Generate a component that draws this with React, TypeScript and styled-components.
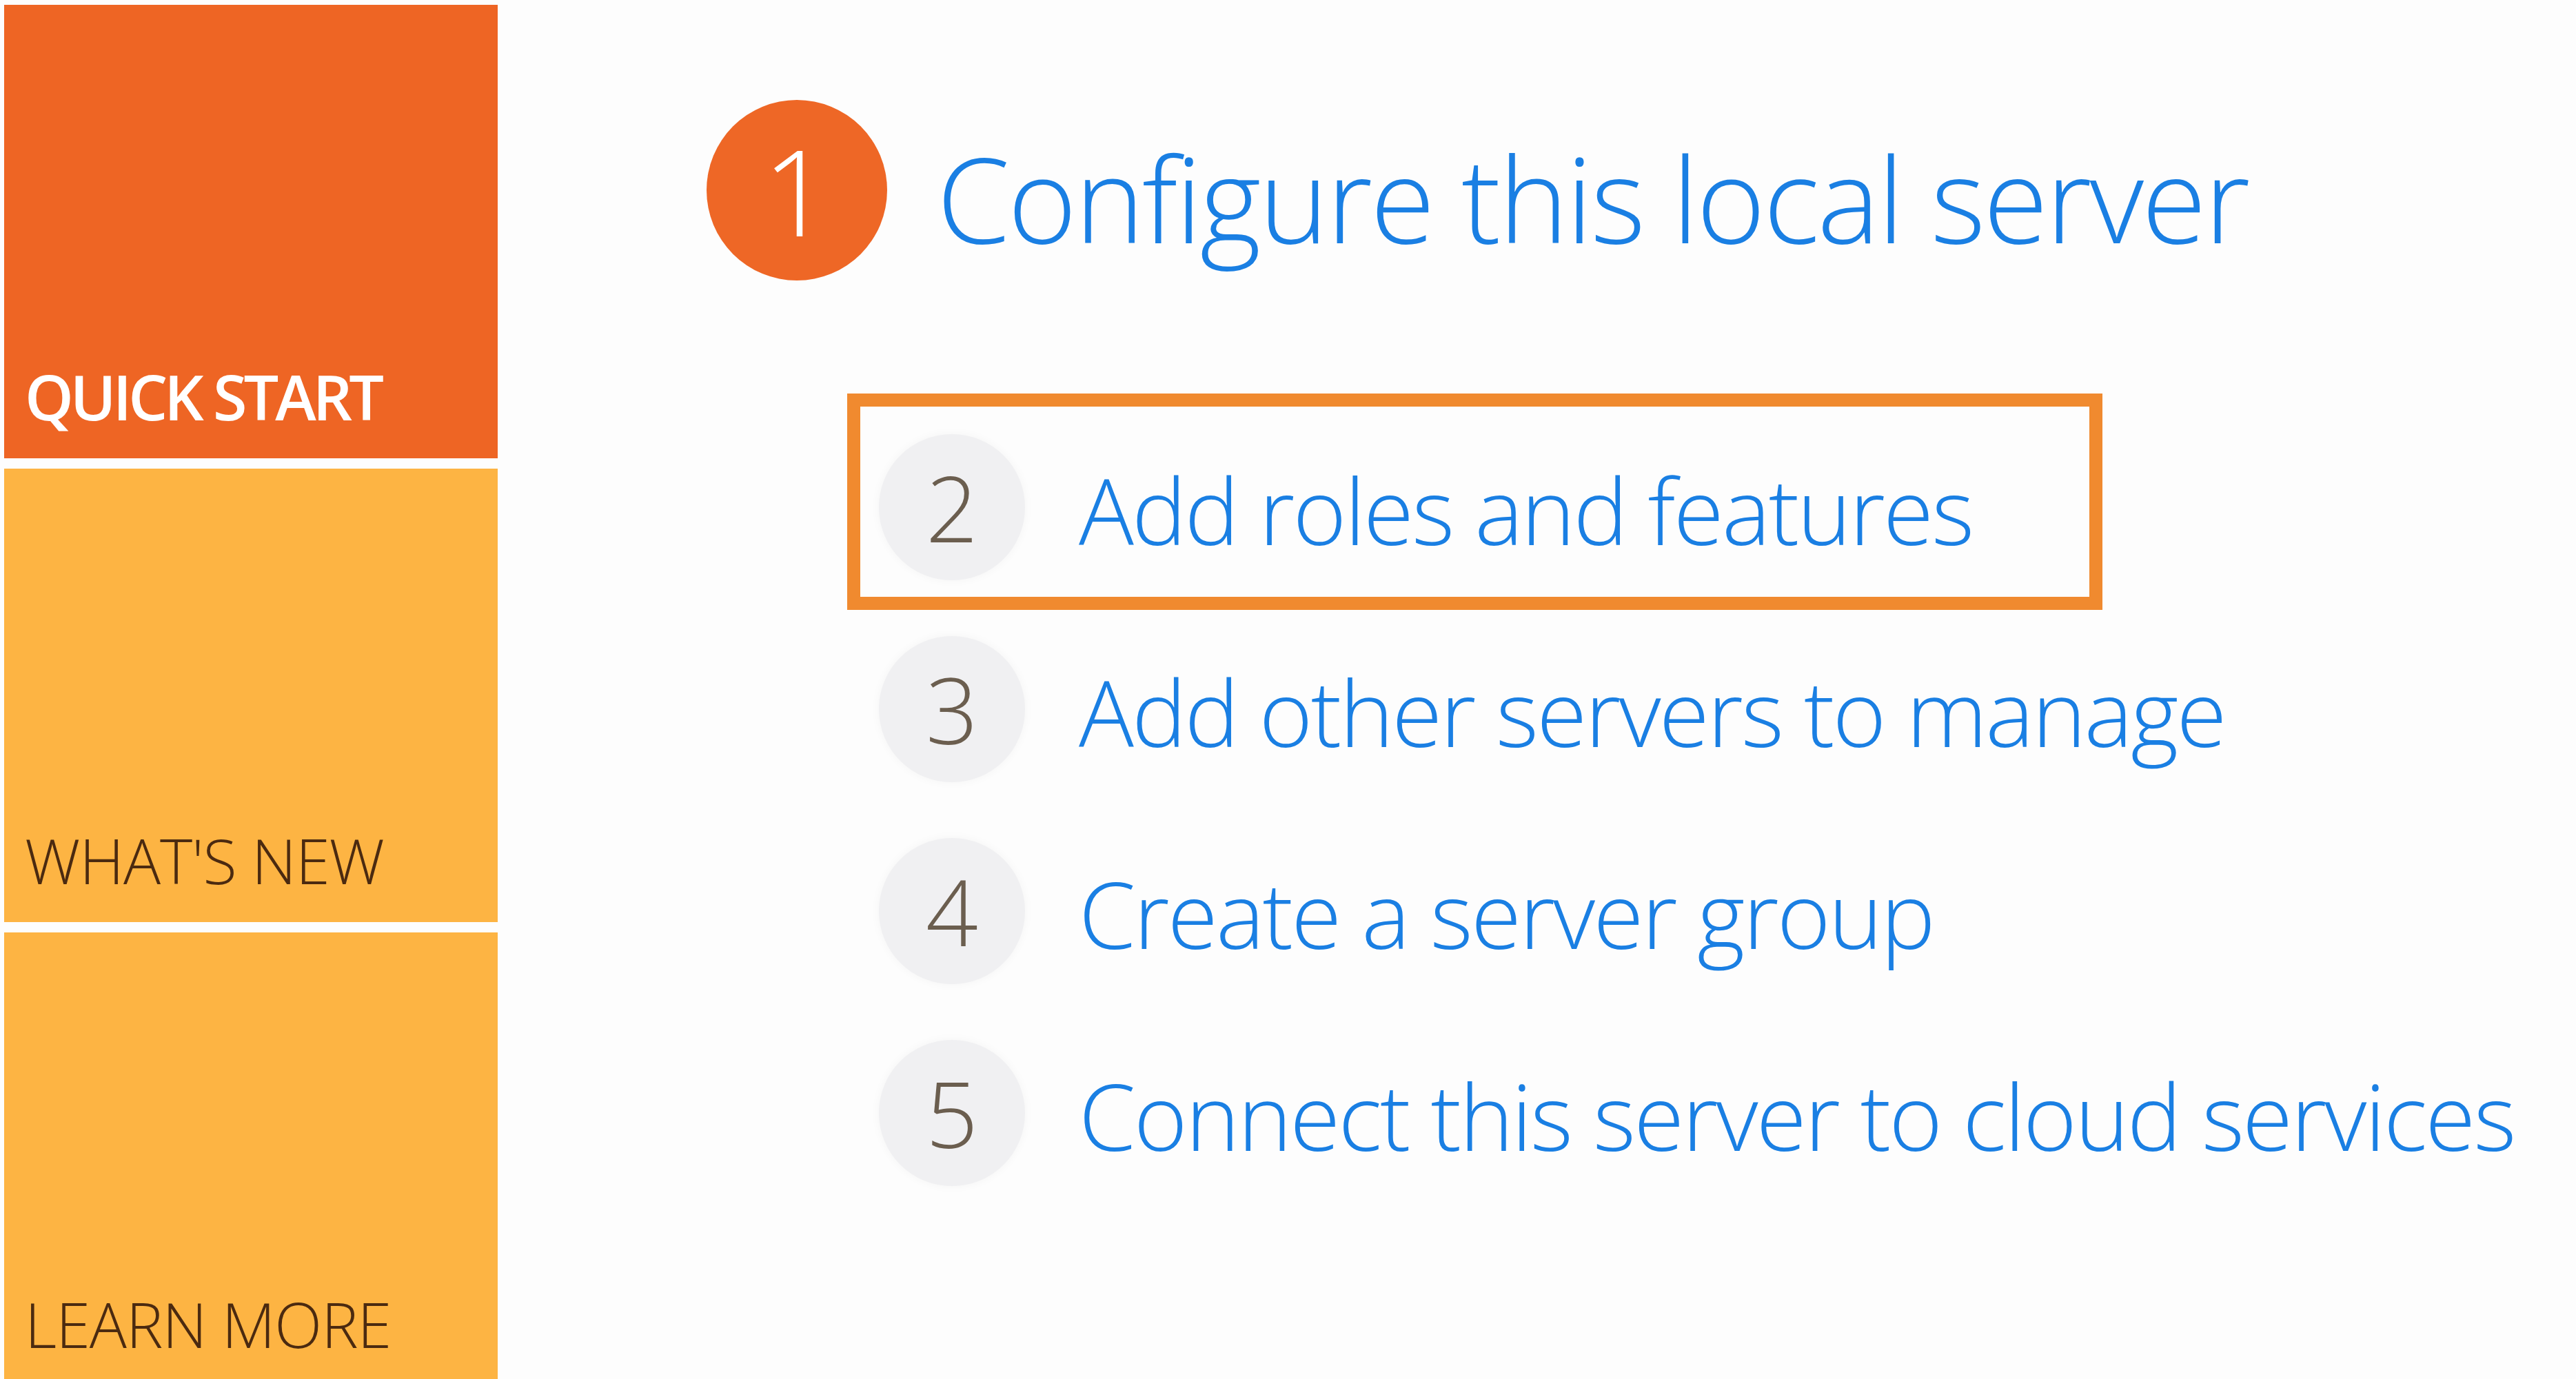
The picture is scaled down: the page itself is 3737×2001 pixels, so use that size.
import React from 'react';
import styled, { createGlobalStyle } from 'styled-components';

const GlobalStyle = createGlobalStyle`
  html, body {
    margin: 0;
    padding: 0;
    background: #fdfdfd;
  }
  body {
    font-family: "Open Sans", "Noto Sans", "Liberation Sans", sans-serif;
  }
`;

const Page = styled.div`
  display: flex;
  align-items: flex-start;
  height: 2001px;
  overflow: hidden;
  padding: 7px 0 0 6px;
  box-sizing: border-box;
`;

// left column of coloured tiles
const Sidebar = styled.nav`
  display: flex;
  flex-direction: column;
  gap: 15px;
  width: 716px;
  flex-shrink: 0;
`;

const Tile = styled.a<{ $bg: string; $fg: string; $strong?: boolean }>`
  display: flex;
  align-items: flex-end;
  height: 658px;
  padding: 0 30px 36px;
  box-sizing: border-box;
  background: ${(p) => p.$bg};
  color: ${(p) => p.$fg};
  font-size: 90px;
  font-weight: ${(p) => (p.$strong ? 600 : 300)};
  letter-spacing: ${(p) => (p.$strong ? -5 : -1)}px;
  line-height: 1.2;
  text-decoration: none;
  white-space: nowrap;
`;

const Main = styled.main`
  display: flex;
  flex-direction: column;
  margin-left: 303px;
  padding-top: 138px;
`;

const Heading = styled.div`
  display: flex;
  align-items: center;
  gap: 72px;
`;

const StepBadge = styled.div<{ $size: number; $active?: boolean }>`
  display: flex;
  align-items: center;
  justify-content: center;
  width: ${(p) => p.$size}px;
  height: ${(p) => p.$size}px;
  flex-shrink: 0;
  border-radius: 50%;
  background: ${(p) => (p.$active ? '#ee6726' : '#f0f0f2')};
  box-shadow: ${(p) => (p.$active ? 'none' : '0 0 14px rgba(0, 0, 0, 0.04)')};
  color: ${(p) => (p.$active ? '#ffffff' : '#6b5e4f')};
  font-size: ${(p) => (p.$active ? 174 : 133)}px;
  font-weight: 300;
  line-height: 1;
`;

const Title = styled.h1`
  margin: 0;
  color: #1a7fe3;
  font-size: 171px;
  font-weight: 300;
  letter-spacing: -3.1px;
  line-height: 1;
  white-space: nowrap;
  transform: translateY(10px);
`;

const StepList = styled.ol`
  display: flex;
  flex-direction: column;
  list-style: none;
  margin: 182px 0 0;
  padding: 0 0 0 250px;
`;

const Step = styled.li<{ $selected?: boolean }>`
  position: relative;
  display: flex;
  align-items: center;
  gap: 78px;
  height: 293px;

  ${(p) =>
    p.$selected &&
    `
    &::after {
      content: '';
      position: absolute;
      left: -46px;
      top: -18px;
      width: 1821px;
      height: 314px;
      border: 19px solid #f08a2f;
      box-sizing: border-box;
      pointer-events: none;
    }
  `}
`;

const StepLabel = styled.span`
  color: #1a7fe3;
  font-size: 133px;
  font-weight: 300;
  letter-spacing: -2.8px;
  line-height: 1;
  white-space: nowrap;
  transform: translateY(4px);
`;

const steps = [
  { n: 2, label: 'Add roles and features', selected: true },
  { n: 3, label: 'Add other servers to manage' },
  { n: 4, label: 'Create a server group' },
  { n: 5, label: 'Connect this server to cloud services' },
];

export default function App() {
  return (
    <>
      <GlobalStyle />
      <Page>
        <Sidebar>
          <Tile $bg="#ee6524" $fg="#ffffff" $strong>
            QUICK START
          </Tile>
          <Tile $bg="#fdb443" $fg="#4b2a10">
            WHAT'S NEW
          </Tile>
          <Tile $bg="#fdb443" $fg="#4b2a10">
            LEARN MORE
          </Tile>
        </Sidebar>

        <Main>
          <Heading>
            <StepBadge $size={262} $active>
              1
            </StepBadge>
            <Title>Configure this local server</Title>
          </Heading>

          <StepList>
            {steps.map((s) => (
              <Step key={s.n} $selected={s.selected}>
                <StepBadge $size={212}>{s.n}</StepBadge>
                <StepLabel>{s.label}</StepLabel>
              </Step>
            ))}
          </StepList>
        </Main>
      </Page>
    </>
  );
}
